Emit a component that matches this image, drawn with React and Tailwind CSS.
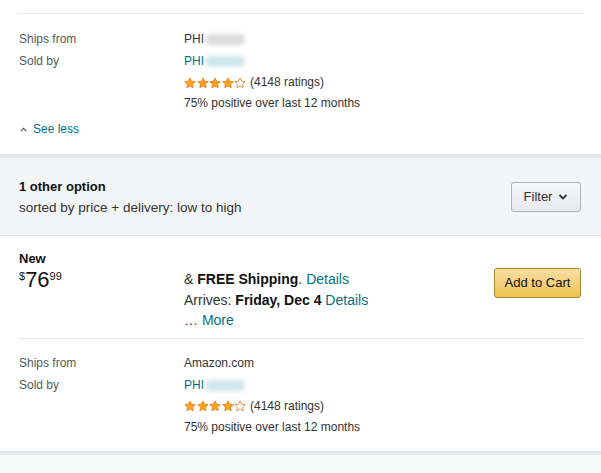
import React from 'react';

const font = { fontFamily: '"Liberation Sans", Arial, sans-serif' };

function Star({ filled }) {
  return (
    <svg width="12" height="12" viewBox="0 0 24 24" className="shrink-0">
      <path
        d="M12 1.8l3.1 6.6 7.2.9-5.3 5 1.4 7.1L12 17.9l-6.4 3.5 1.4-7.1-5.3-5 7.2-.9z"
        fill={filled ? '#ffa41c' : 'none'}
        stroke={filled ? '#e47911' : '#de7921'}
        strokeWidth="1.6"
        strokeLinejoin="round"
      />
    </svg>
  );
}

function Stars() {
  return (
    <span className="inline-flex items-center gap-[0.5px]">
      <Star filled />
      <Star filled />
      <Star filled />
      <Star filled />
      <Star />
    </span>
  );
}

function BlurName({ link }) {
  return (
    <span className={link ? 'text-[#007185]' : 'text-[#333]'}>
      PHI
      <span
        className={
          'inline-block align-middle ml-[1px] h-[11px] w-[40px] rounded-full blur-[2px] ' +
          (link ? 'bg-[#cfe6ec]' : 'bg-[#dcdcdc]')
        }
      />
    </span>
  );
}

function SellerInfo({ shipsFrom, gap = 'leading-[23px]' }) {
  return (
    <div className="grid grid-cols-[165px_1fr] text-[12px] leading-[21px]">
      <div className={'text-[#565959] ' + gap}>Ships from</div>
      <div className={'text-[#333] ' + gap}>{shipsFrom}</div>
      <div className="text-[#565959]">Sold by</div>
      <div>
        <BlurName link />
        <div className="flex items-center gap-[4px] text-[#333]">
          <Stars />
          <span>(4148 ratings)</span>
        </div>
        <div className="text-[#333]">75% positive over last 12 months</div>
      </div>
    </div>
  );
}

export default function App() {
  return (
    <div className="w-[601px] h-[473px] overflow-hidden bg-white" style={font}>
      {/* Current offer details */}
      <div className="pt-[13px] pb-[16px]">
        <div className="mx-[17px] border-t border-[#e7e7e7]" />
        <div className="px-[19px] pt-[14px]">
          <SellerInfo shipsFrom={<BlurName />} />
          <div className="mt-[6px] flex items-center gap-[6px] text-[12px] leading-[18px] text-[#007185]">
            <svg width="7" height="5" viewBox="0 0 7 5" className="ml-[1px]">
              <path d="M0.8 4.2L3.5 1.4l2.7 2.8" fill="none" stroke="#555" strokeWidth="1.1" />
            </svg>
            See less
          </div>
        </div>
      </div>

      <div className="h-[4px] bg-[#e3e9ec]" />

      {/* Other options header */}
      <div className="bg-[#f4f5f6] border-b border-[#e3e6e6] h-[78px] px-[19px] flex items-center justify-between">
        <div className="pt-[1px]">
          <div className="text-[13px] font-bold text-[#0f1111] leading-[21px]">1 other option</div>
          <div className="text-[13.5px] text-[#333] leading-[21px]">sorted by price + delivery: low to high</div>
        </div>
        <button className="h-[30px] w-[70px] mr-[1px] rounded-[3px] border border-[#adb1b8] bg-gradient-to-b from-[#f7f8fa] to-[#e7e9ec] text-[13px] text-[#333] flex items-center justify-center gap-[6px]">
          Filter
          <svg width="10" height="8" viewBox="0 0 10 8">
            <path d="M1.5 2l3.5 3.5L8.5 2" fill="none" stroke="#333" strokeWidth="1.8" />
          </svg>
        </button>
      </div>

      {/* Offer */}
      <div className="pt-[15px]">
        <div className="px-[19px] grid grid-cols-[165px_1fr_auto]">
          <div>
            <div className="text-[13px] font-bold text-[#0f1111] leading-[16px]">New</div>
            <div className="flex items-start text-[#0f1111]">
              <span className="text-[11px] leading-[14px] mt-[2px]">$</span>
              <span className="text-[22px] leading-[26px]">76</span>
              <span className="text-[11px] leading-[14px] mt-[2px]">99</span>
            </div>
          </div>
          <div className="pt-[18px] text-[14px] leading-[20.5px] text-[#333]">
            <div>
              &amp; <b className="text-[#0f1111]">FREE Shipping</b>. <span className="text-[#007185]">Details</span>
            </div>
            <div>
              Arrives: <b className="text-[#0f1111]">Friday, Dec 4</b> <span className="text-[#007185]">Details</span>
            </div>
            <div>
              … <span className="text-[#007185]">More</span>
            </div>
          </div>
          <div className="pt-[17px] pr-[1px]">
            <button className="h-[30px] w-[87px] rounded-[3px] border border-[#a88734] bg-gradient-to-b from-[#f7dfa5] to-[#f0c14b] text-[13px] text-[#111]">
              Add to Cart
            </button>
          </div>
        </div>

        <div className="ml-[19px] mr-[17px] mt-[7px] border-t border-[#e7e7e7]" />

        <div className="px-[19px] pt-[12px] pb-[13px]">
          <SellerInfo shipsFrom="Amazon.com" gap="leading-[24px]" />
        </div>
      </div>

      <div className="h-[4px] bg-[#e3eaee]" />
      <div className="h-[40px] bg-[#f7f9f9]" />
    </div>
  );
}
